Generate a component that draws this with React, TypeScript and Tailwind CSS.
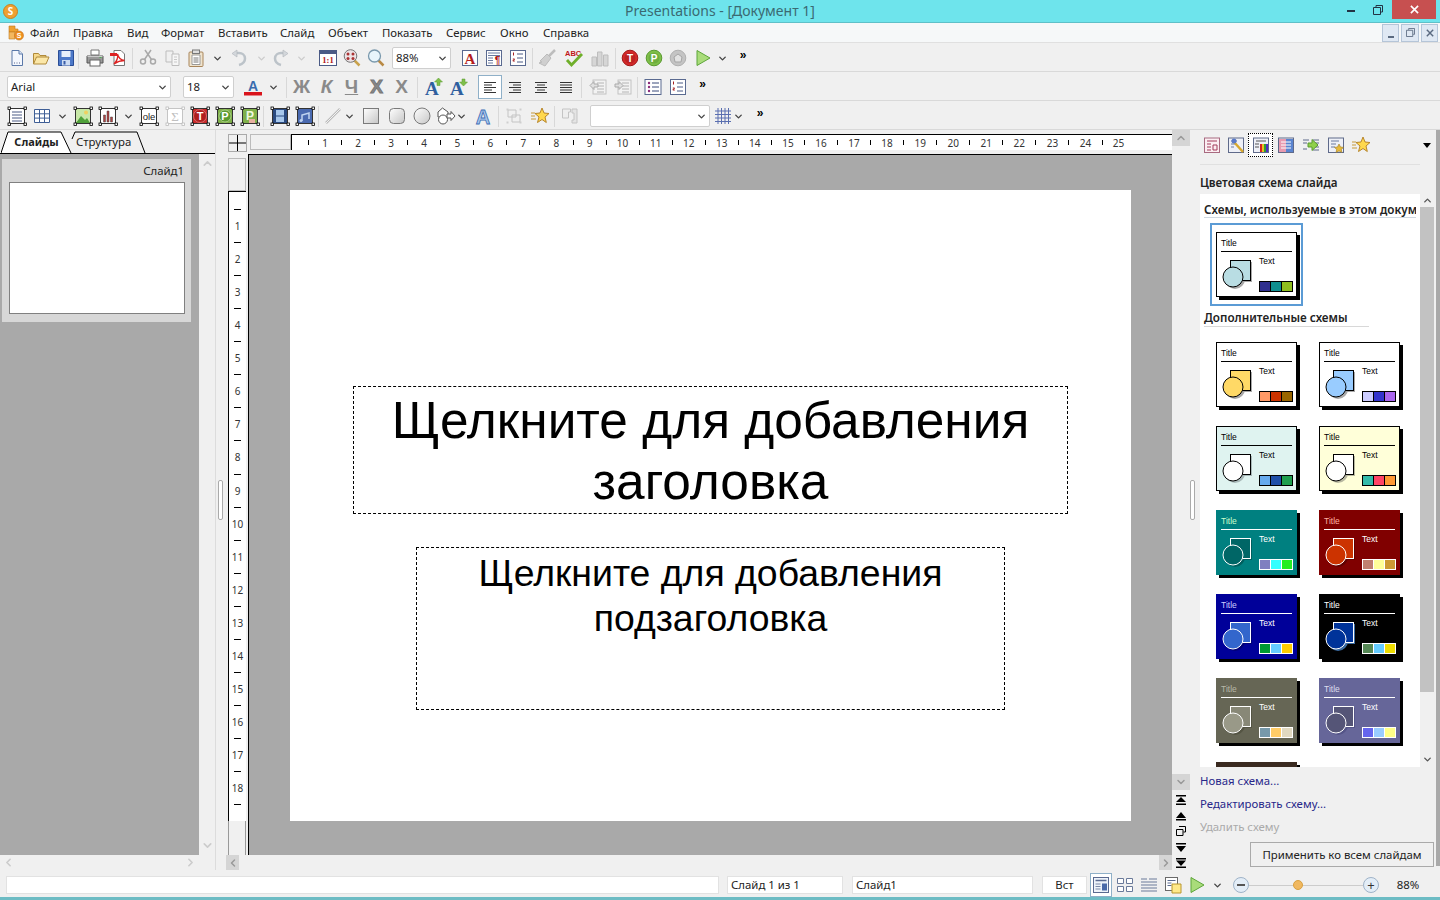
import { ReactNode } from 'react';
import { ChevronDown, ChevronLeft, ChevronRight, ChevronUp } from 'lucide-react';

const Svg = ({ children }: { children: ReactNode }) => (
  <svg viewBox="0 0 18 18" className="block w-[18px] h-[18px] flex-none overflow-visible">{children}</svg>
);

const Chev = () => <ChevronDown size={11} strokeWidth={3} className="text-[#444] flex-none" />;

const Sep = ({ cls = 'mx-[3px]' }: { cls?: string }) => <div className={`w-px h-[21px] bg-[#d8d8d8] flex-none ${cls}`} />;

const Slot = ({ w = 'w-[24px]', children }: { w?: string; children: ReactNode }) => (
  <div className={`${w} h-[22px] flex items-center justify-center flex-none`}>{children}</div>
);

const More = () => <span className="text-[12px] leading-[14px] font-bold text-black -mt-[6px] font-['Liberation_Sans',sans-serif]">»</span>;

// row 1 icons
const NewDoc = () => (
  <Svg>
    <path d="M4 1.500h7l3.500 3.500v11.500H4z" fill="#f4f7fd" stroke="#5a78a8" />
    <path d="M11 1.500V5h3.500" fill="#dfe8f6" stroke="#5a78a8" />
    <path d="M6 14h1M8.500 14h1M11 14h1" stroke="#55608a" />
  </Svg>
);
const OpenFolder = () => (
  <Svg>
    <path d="M1.500 15V4.500h5l1.500 2h6v2" fill="#f6d98c" stroke="#b08a3a" />
    <path d="M1.500 15l3-7h12.500l-3 7z" fill="#fbe7a8" stroke="#b08a3a" />
  </Svg>
);
const Floppy = () => (
  <Svg>
    <path d="M1.500 1.500h15v15h-15z" fill="#4d79c9" stroke="#2a4d96" />
    <rect x="4.500" y="2" width="9" height="6" fill="#e8f0fb" />
    <rect x="5" y="11" width="8" height="5.500" fill="#cddcf3" />
    <rect x="6.500" y="12" width="2" height="3.500" fill="#3a5da8" />
  </Svg>
);
const Printer = () => (
  <Svg>
    <path d="M5 1h8v5H5z" fill="#fff" stroke="#777" />
    <path d="M1 7h16v7H1z" fill="#9a9a9a" stroke="#555" />
    <rect x="4" y="11" width="10" height="6" fill="#fff" stroke="#666" />
    <path d="M13.500 8.500h2" stroke="#4caf50" />
    <path d="M1.500 7.500h15" stroke="#ccc" />
  </Svg>
);
const Pdf = () => (
  <Svg>
    <path d="M5 1.500h7l3.500 3.500v11.500H5z" fill="#fff" stroke="#777" />
    <path d="M1 4h7v3H1z" fill="#d22" />
    <path d="M5 15c3-3 4-7 3.500-10 1 4 3 6 7 6.500-4 0-7 1-10.500 3.500z" fill="none" stroke="#d22" strokeWidth="1.300" />
  </Svg>
);
const Scissors = () => (
  <Svg>
    <circle cx="4" cy="12.500" r="2.500" fill="none" stroke="#a9a9a9" strokeWidth="1.500" />
    <circle cx="14" cy="12.500" r="2.500" fill="none" stroke="#a9a9a9" strokeWidth="1.500" />
    <path d="M5.500 10.500L12 1M12.500 10.500L6 1" stroke="#a9a9a9" strokeWidth="1.500" />
  </Svg>
);
const Copy = () => (
  <Svg>
    <path d="M2 2h7v11H2z" fill="#f0f0f0" stroke="#bdbdbd" />
    <path d="M8 5h7v11.500H8z" fill="#f6f6f6" stroke="#bdbdbd" />
    <path d="M10 8h3M10 10.500h3M10 13h3" stroke="#c8c8c8" />
  </Svg>
);
const Paste = () => (
  <Svg>
    <rect x="2" y="3" width="14" height="14.500" rx="1" fill="#efe3cd" stroke="#a8855a" />
    <rect x="5.500" y="1" width="7" height="3.500" fill="#ddd" stroke="#777" />
    <path d="M5 6h8v9.500H5z" fill="#fff" stroke="#999" />
    <path d="M6.500 9h5M6.500 11h5M6.500 13h5" stroke="#777" />
  </Svg>
);
const Undo = ({ flip = false }: { flip?: boolean }) => (
  <Svg>
    <g transform={flip ? 'translate(18,0) scale(-1,1)' : undefined}>
      <path d="M9 16c4-1 6-3 6-6.500C15 6 12 4 9 4H5" fill="none" stroke="#bcc3c9" strokeWidth="2.500" />
      <path d="M7 1L2 4.500 7 8z" fill="#d3d7db" stroke="#aeb4ba" strokeWidth=".6" />
    </g>
  </Svg>
);
const OneToOne = () => (
  <Svg>
    <rect x="0.500" y="1.500" width="17" height="15" fill="#fff" stroke="#4a5a85" />
    <rect x="1" y="2" width="16" height="3" fill="#4a5a85" />
    <text x="9" y="14" textAnchor="middle" fontSize="8.500" fontWeight="700" fill="#b01818" fontFamily="Liberation Serif">1:1</text>
  </Svg>
);
const ZoomFit = () => (
  <Svg>
    <path d="M11 11l5.500 5.500" stroke="#c9a24d" strokeWidth="2.500" />
    <circle cx="7.500" cy="7" r="6.300" fill="#ece3e6" stroke="#777" />
    <circle cx="5" cy="5" r="1.500" fill="#a33" />
    <circle cx="10" cy="5" r="1.500" fill="#a33" />
    <circle cx="5" cy="9.500" r="1.500" fill="#a33" />
    <circle cx="10" cy="9.500" r="1.500" fill="#a33" />
  </Svg>
);
const Magnifier = () => (
  <Svg>
    <path d="M11.500 11.500l5 5" stroke="#b98a45" strokeWidth="2.500" />
    <circle cx="7.500" cy="7" r="6" fill="#e8f5fb" stroke="#7a99ad" strokeWidth="1.300" />
  </Svg>
);
const BoxA = () => (
  <Svg>
    <rect x="1.500" y="1.500" width="15" height="15" fill="#fff" stroke="#5a6a90" />
    <text x="9" y="14.500" textAnchor="middle" fontSize="15" fontWeight="700" fill="#b31c1c" fontFamily="Liberation Serif">A</text>
  </Svg>
);
const BoxPara = () => (
  <Svg>
    <rect x="1.500" y="1.500" width="15" height="15" fill="#fff" stroke="#5a6a90" />
    <path d="M3 4h12M3 6.500h12M3 9h5M3 11.500h5M3 14h5" stroke="#6a7aa0" />
    <text x="12.500" y="15" textAnchor="middle" fontSize="10" fontWeight="700" fill="#b01818" fontFamily="Liberation Sans">¶</text>
  </Svg>
);
const BoxList = () => (
  <Svg>
    <rect x="1.500" y="1.500" width="15" height="15" fill="#fff" stroke="#5a6a90" />
    <path d="M4.500 3.500v3M3.800 10h1.800l-1.800 2h2" stroke="#a52020" fill="none" />
    <path d="M8 5h6M8 9h6M8 13h6" stroke="#4a5a85" />
  </Svg>
);
const Broom = () => (
  <Svg>
    <path d="M17 1l-6 6" stroke="#bdbdbd" strokeWidth="2.500" />
    <path d="M9 5l4 4-6 8-6-3 3-1-2-1z" fill="#cfcfcf" stroke="#bbb" />
  </Svg>
);
const AbcCheck = () => (
  <Svg>
    <text x="0" y="7" fontSize="7.500" fontWeight="700" fill="#c01818" fontFamily="Liberation Sans">ABC</text>
    <path d="M2 11l4.500 5L17 5" fill="none" stroke="#6faf2a" strokeWidth="2.800" />
  </Svg>
);
const ChartGray = () => (
  <Svg>
    <path d="M1 8h4.500v9H1zM6.500 3H11v14H6.500zM12.500 6H17v11h-4.500z" fill="#d6d6d6" stroke="#bdbdbd" />
  </Svg>
);
const Ball = ({ c, c2, t }: { c: string; c2: string; t?: string }) => (
  <Svg>
    <circle cx="9" cy="9" r="7.800" fill={c} stroke={c2} />
    <circle cx="9" cy="9" r="5.500" fill={c2} opacity=".45" />
    {t && <text x="9" y="12.500" textAnchor="middle" fontSize="10" fontWeight="700" fill="#fff" fontFamily="Liberation Sans">{t}</text>}
  </Svg>
);
const GrayBall = () => (
  <Svg>
    <circle cx="9" cy="9" r="7.800" fill="#c4c4c4" stroke="#b0b0b0" />
    <path d="M5 8l4-3 4 3-1 5H6z" fill="#e2e2e2" stroke="#a5a5a5" />
  </Svg>
);
const Play = () => (
  <Svg>
    <path d="M3 1.500l13 7.500-13 7.500z" fill="#a9dc7a" stroke="#5da53a" />
  </Svg>
);

// row 2 icons
const FontColor = () => (
  <Svg>
    <text x="9" y="12.500" textAnchor="middle" fontSize="14" fontWeight="700" fill="#3a6cae" fontFamily="Liberation Sans">A</text>
    <rect x="0" y="14" width="18" height="3.500" fill="#d9141c" />
  </Svg>
);
const Fmt = ({ children, cls = '' }: { children: ReactNode; cls?: string }) => (
  <span className={`text-[19px] leading-[22px] font-bold text-[#8a8a8a] font-['Liberation_Sans',sans-serif] ${cls}`}>{children}</span>
);
const AUp = ({ down = false }: { down?: boolean }) => (
  <Svg>
    <text x="0" y="17" fontSize="19" fontWeight="700" fill="#2f5f9f" fontFamily="Liberation Serif">A</text>
    <path d={down ? 'M12 1h3v3h2.500l-4 4-4-4H12z' : 'M13.500 0l4 4H15v3.500h-3V4H9.500z'} fill="#7fbf4a" stroke="#5a9a30" strokeWidth=".5" />
  </Svg>
);
const Align = ({ d }: { d: string }) => (
  <Svg>
    <path d={d} stroke="#333" strokeWidth="1" />
  </Svg>
);
const Indent = ({ flip = false }: { flip?: boolean }) => (
  <Svg>
    <rect x="4" y="2" width="13" height="14" fill="#f3f3f3" stroke="#c2c2c2" />
    <path d="M8 5h7M8 8h7M8 11h7M8 14h7" stroke="#b4b4b4" />
    <path d={flip ? 'M1 6h4V3.500L9 7.500l-4 4V9H1z' : 'M9 6H5V3.500L1 7.500l4 4V9h4z'} fill="#e0e0e0" stroke="#aaa" />
  </Svg>
);
const Bullets = () => (
  <Svg>
    <rect x="1" y="1.500" width="16" height="15" fill="#fff" stroke="#5a6a90" />
    <circle cx="5" cy="5" r="1.200" fill="#8a2a7a" />
    <circle cx="5" cy="9" r="1.200" fill="#8a2a7a" />
    <circle cx="5" cy="13" r="1.200" fill="#8a2a7a" />
    <path d="M8 5h7M8 9h7M8 13h7" stroke="#3a4a7a" />
  </Svg>
);

// row 3 icons: object frames with handles
const Frame = ({ children, dim = false }: { children: ReactNode; dim?: boolean }) => {
  const pts = [[1, 1], [17, 1], [1, 17], [17, 17]];
  return (
    <Svg>
      <rect x="1.500" y="1.500" width="15" height="15" fill="#fff" stroke={dim ? '#c5c5c5' : '#333'} />
      {children}
      {pts.map(([x, y]) => (
        <rect key={`${x}-${y}`} x={x - 1} y={y - 1} width="2.500" height="2.500" fill="#fff" stroke={dim ? '#bbb' : '#000'} strokeWidth=".8" />
      ))}
    </Svg>
  );
};
const Table = () => (
  <Svg>
    <path d="M1.500 2.500h15v13h-15zM1.500 6.800h15M1.500 11.100h15M6.500 2.500v13M11.500 2.500v13" fill="#fff" stroke="#3e5e96" />
  </Svg>
);
const Rect3d = ({ r = 0 }: { r?: number }) => (
  <Svg>
    <defs>
      <linearGradient id="gr" x1="0" y1="0" x2="1" y2="1">
        <stop offset="0" stopColor="#fff" />
        <stop offset="1" stopColor="#c6c6c6" />
      </linearGradient>
    </defs>
    <rect x="1.500" y="1.500" width="15" height="15" rx={r} fill="url(#gr)" stroke="#7a7a7a" />
  </Svg>
);
const Circle3d = () => (
  <Svg>
    <circle cx="9" cy="9" r="8" fill="url(#gr)" stroke="#7a7a7a" />
  </Svg>
);
const Shapes = () => (
  <Svg>
    <path d="M5.500 1L11 5v5H1V5z" fill="#fff" stroke="#555" />
    <circle cx="6" cy="12.500" r="4.500" fill="#fff" stroke="#555" />
    <path d="M10 7h4V4.500L18 9l-4 4.500V11h-4z" fill="#fff" stroke="#555" />
  </Svg>
);
const WordArt = () => (
  <Svg>
    <text x="9" y="16.500" textAnchor="middle" fontSize="20" fontWeight="700" fill="#a8c8ec" stroke="#3f6fb5" strokeWidth=".8" fontFamily="Liberation Sans">A</text>
  </Svg>
);
const Group = () => (
  <Svg>
    <path d="M3 3h8v7H3zM7 8h8v7H7z" fill="none" stroke="#c4c4c4" />
    <path d="M1.500 1.500h2v2h-2zM14.500 1.500h2v2h-2zM1.500 14.500h2v2h-2zM14.500 14.500h2v2h-2z" fill="#cfcfcf" />
  </Svg>
);
const Star = () => (
  <Svg>
    <path d="M11 1l2 5 5 .5-4 3.500 1.300 5.500L11 12.500 6.500 15.500 8 10 4 6.500 9 6z" fill="#ffd84d" stroke="#b8862a" />
    <path d="M0 6h4M0 9h4M0 12h5" stroke="#c69a3a" />
  </Svg>
);
const ToolGray = () => (
  <Svg>
    <path d="M1.500 2h8v3h-2v6h-6z" fill="#eee" stroke="#c4c4c4" />
    <path d="M11 2h5v14h-5v-3h2V6h-2z" fill="#e4e4e4" stroke="#c4c4c4" />
  </Svg>
);
const GridBlue = () => (
  <Svg>
    <path d="M1 4h16M1 7.500h16M1 11h16M1 14.500h16M4 1v16M7.500 1v16M11 1v16M14.500 1v16" stroke="#5a6fb0" />
  </Svg>
);

// task pane icons
const Pane = ({ kind }: { kind: number }) => (
  <Svg>
    <rect x="1.500" y="2" width="15" height="14.500" fill={kind === 0 ? '#fbeef2' : '#eef0f7'} stroke={kind === 0 ? '#a86a80' : '#5f6a8a'} />
    {kind === 0 && <path d="M4 5h10M4 8h4M4 11h4M4 14h4M10 9h4v5h-4z" stroke="#a33a5a" fill="none" />}
    {kind === 1 && (
      <>
        <path d="M4 5h6M4 8h4M4 11h3" stroke="#6a7aa0" />
        <path d="M7 6l9 10" stroke="#d9a92e" strokeWidth="2.500" />
        <circle cx="7" cy="5" r="2.500" fill="#5a7ac8" />
      </>
    )}
    {kind === 2 && (
      <>
        <path d="M4 5h10M3 8h4M3 11h4" stroke="#555" />
        <path d="M8 8h2v8H8z" fill="#d92020" />
        <path d="M10 8h2v8h-2z" fill="#e8c020" />
        <path d="M12 8h2v8h-2z" fill="#30a030" />
        <path d="M14 8h2v8h-2z" fill="#5030c0" />
      </>
    )}
    {kind === 3 && (
      <>
        <path d="M2 3h7v13H2z" fill="#e89ab0" />
        <path d="M9 3h7v13H9z" fill="#5a84d0" />
        <path d="M4 6h10M4 9h10M4 12h10" stroke="#fff" />
      </>
    )}
    {kind === 4 && (
      <>
        <rect x="1" y="1" width="16" height="16" fill="#f0f0f0" />
        <path d="M1 4h6M1 7h4M1 13h4M11 4h6M13 7h4M13 11h4M11 14h6" stroke="#5f6a8a" />
        <path d="M6 7h4V3.500L16 9l-6 5.500V11H6z" fill="#8fd04a" stroke="#5a9a30" />
      </>
    )}
    {kind === 5 && (
      <>
        <path d="M4 5h8M4 8h5M4 11h4" stroke="#6a7aa0" />
        <path d="M12 8l1.500 3 3 .4-2.200 2 .6 3-2.900-1.500-2.900 1.500.6-3-2.200-2 3-.4z" fill="#e8b93a" stroke="#9a7a20" strokeWidth=".6" />
      </>
    )}
  </Svg>
);

// status bar view icons
const ViewNormal = () => (
  <Svg>
    <rect x="1.500" y="1.500" width="15" height="15" fill="#eef3fa" stroke="#5a6a90" />
    <path d="M3.500 4.500h11" stroke="#5a6a90" strokeWidth="1.500" />
    <path d="M3.500 8h5M3.500 10.500h5M3.500 13h5" stroke="#7a8aa8" />
    <rect x="10" y="7.500" width="5" height="7" fill="#4a6aa8" />
  </Svg>
);
const ViewGrid = () => (
  <Svg>
    <path d="M1.500 2.500h6v5h-6zM10.500 2.500h6v5h-6zM1.500 10.500h6v5h-6zM10.500 10.500h6v5h-6z" fill="#fff" stroke="#6a7a9a" />
  </Svg>
);
const ViewOutline = () => (
  <Svg>
    <path d="M1 3h6M9 3h8M1 6h16M1 9h16M1 12h16M1 15h16" stroke="#6a7a9a" />
  </Svg>
);
const ViewNotes = () => (
  <Svg>
    <rect x="1.500" y="1.500" width="12" height="13" fill="#fff" stroke="#6a6a6a" />
    <path d="M3.500 4.500h8M3.500 7h4M3.500 9.500h4" stroke="#5a6a90" />
    <path d="M8 8h9v9H8z" fill="#ffe98a" stroke="#b8962e" />
  </Svg>
);

const Nav = ({ kind }: { kind: string }) => (
  <svg viewBox="0 0 12 12" className="block w-[12px] h-[12px]">
    {kind === 'first' && <path d="M1 1h10v1.500H1zM6 3l5 5H1zM1 9.500h10V11H1z" />}
    {kind === 'prev' && <path d="M6 2l5 6H1zM1 9h10v1.500H1z" />}
    {kind === 'win' && <path d="M4 1.500h6.500V7H8.500M1.500 4.500h6.500V10.500H1.500z" fill="none" stroke="#000" />}
    {kind === 'next' && <path d="M1 2h10v1.500H1zM1 5h10l-5 6z" />}
    {kind === 'last' && <path d="M1 1h10v1.500H1zM1 3.500h10L6 9zM1 9.500h10V11H1z" />}
  </svg>
);

const Field = ({ w, children, cls = '' }: { w: string; children?: ReactNode; cls?: string }) => (
  <div className={`${w} h-[18px] bg-white border border-[#e2e2e2] flex items-center text-[11.400px] leading-[14px] text-[#222] flex-none ${cls}`}>{children}</div>
);

const Select = ({ w, text }: { w: string; text?: string }) => (
  <div className={`${w} h-[22px] bg-white border border-[#cfcfcf] rounded-[2px] flex items-center justify-between pl-[3px] pr-[2px] text-[11.400px] text-[#222] flex-none`}>
    <span>{text}</span>
    <Chev />
  </div>
);

const menu = [
  ['Файл', 'w-[43px]'],
  ['Правка', 'w-[54px]'],
  ['Вид', 'w-[34px]'],
  ['Формат', 'w-[57px]'],
  ['Вставить', 'w-[62px]'],
  ['Слайд', 'w-[48px]'],
  ['Объект', 'w-[54px]'],
  ['Показать', 'w-[64px]'],
  ['Сервис', 'w-[54px]'],
  ['Окно', 'w-[43px]'],
  ['Справка', 'w-[60px]'],
];

const rulerH = Array.from({ length: 25 }, (_, i) => i + 1);
const rulerV = Array.from({ length: 18 }, (_, i) => i + 1);

type Scheme = { bg: string; fg: string; title: string; shape: string; circle?: string; shadow: string; cards: string[]; frame: string; partial?: boolean };

const schemes: Scheme[] = [
  { bg: '#ffffff', fg: '#000000', title: '#000000', shape: '#ffd966', shadow: '#a8a8a8', cards: ['#ff9966', '#cc3300', '#996600'], frame: '#000000' },
  { bg: '#ffffff', fg: '#000000', title: '#000000', shape: '#99ccff', shadow: '#a8a8a8', cards: ['#ccccff', '#3333cc', '#aa66ee'], frame: '#000000' },
  { bg: '#dff3f0', fg: '#000000', title: '#000000', shape: '#ffffff', shadow: '#a8b8b8', cards: ['#66aaee', '#1f4fa8', '#1f9f4f'], frame: '#000000' },
  { bg: '#ffffd9', fg: '#000000', title: '#000000', shape: '#ffffff', shadow: '#b8b8a0', cards: ['#33bbaa', '#ff4466', '#ff9933'], frame: '#000000' },
  { bg: '#008080', fg: '#ffffff', title: '#ccffcc', shape: '#006666', shadow: '#006060', cards: ['#7f7fc0', '#33ffff', '#22ee22'], frame: '#ffffff' },
  { bg: '#800000', fg: '#ffffff', title: '#ffb0a0', shape: '#cc3300', shadow: '#600000', cards: ['#c08070', '#ffff99', '#cc9933'], frame: '#ffffff' },
  { bg: '#000099', fg: '#ffffff', title: '#ccccff', shape: '#3366cc', shadow: '#000077', cards: ['#009933', '#66ccff', '#ffcc00'], frame: '#ffffff' },
  { bg: '#000000', fg: '#ffffff', title: '#ffffff', shape: '#003399', shadow: '#3a6aa0', cards: ['#558855', '#66ccff', '#eedd00'], frame: '#ffffff' },
  { bg: '#666655', fg: '#ffffff', title: '#b8b8a8', shape: '#888877', circle: '#999988', shadow: '#555544', cards: ['#7799aa', '#ffcc66', '#e0d8c0'], frame: '#ffffff' },
  { bg: '#666699', fg: '#ffffff', title: '#ddddee', shape: '#555577', shadow: '#555588', cards: ['#6666ee', '#99ccff', '#ffff88'], frame: '#ffffff' },
  { bg: '#3a2a20', fg: '#ffffff', title: '#ccbbaa', shape: '#665544', shadow: '#332211', cards: ['#998877', '#ccbb99', '#eeddbb'], frame: '#ffffff', partial: true },
];

const current: Scheme = { bg: '#ffffff', fg: '#000000', title: '#000000', shape: '#b9dde3', shadow: '#a8a8a8', cards: ['#2f2f8f', '#0f8f8f', '#8fbf1f'], frame: '#000000' };

const SchemeCard = ({ s }: { s: Scheme }) => (
  <svg viewBox="0 0 84 68" className="block w-[84px] h-[68px]">
    <rect x="3" y="3" width="81" height="65" fill="#000" />
    <rect x="0.500" y="0.500" width="80" height="64" fill={s.bg} stroke={s.bg === '#ffffff' || s.bg === '#dff3f0' || s.bg === '#ffffd9' ? '#000' : s.bg} />
    {!s.partial && (
      <>
        <text x="5" y="13.500" fontSize="8.500" fill={s.title} fontFamily="Liberation Sans">Title</text>
        <text x="43" y="31.500" fontSize="8.500" fill={s.fg} fontFamily="Liberation Sans">Text</text>
      </>
    )}
    <path d="M5 19.500h71" stroke={s.fg} />
    <rect x="16" y="30" width="20" height="20" fill={s.shadow} />
    <circle cx="19" cy="47" r="10" fill={s.shadow} />
    <rect x="14.500" y="28.500" width="20" height="20" fill={s.shape} stroke={s.frame} />
    <circle cx="17" cy="45" r="10" fill={s.circle ?? s.shape} stroke={s.frame} />
    {s.cards.map((c, i) => (
      <rect key={c} x={43.5 + i * 11} y="49.500" width="11" height="10" fill={c} stroke={s.frame} />
    ))}
  </svg>
);

const PaneBtn = ({ w = 'w-[25px]', children }: { w?: string; children: ReactNode }) => (
  <div className={`${w} h-[24px] flex items-center justify-center flex-none`}>{children}</div>
);

export default function App() {
  return (
    <div className="w-[1440px] h-[900px] overflow-hidden flex flex-col bg-[#f0f0f0] text-[11.400px] text-[#222] font-['Noto_Sans','Liberation_Sans',sans-serif]">
      {/* Title bar */}
      <div className="h-[23px] bg-[#6ee4ec] border-b border-[#5fc0c8] grid grid-cols-[1fr_auto_1fr] items-center flex-none">
        <div className="pl-[3px]">
          <div className="w-[15px] h-[15px] rounded-full bg-[#f0a030] border border-[#c98020] text-white font-bold text-[10px] leading-[13px] text-center">S</div>
        </div>
        <div className="text-[14px] text-[#3b6a72] leading-[18px]">Presentations - [Документ 1]</div>
        <div className="flex items-start justify-end h-full pr-[4px]">
          <div className="w-[26px] h-[19px] flex items-center justify-center mr-[1px]">
            <div className="w-[8px] h-[2px] bg-[#234] mt-[2px]" />
          </div>
          <div className="w-[26px] h-[19px] flex items-center justify-center mr-px">
            <svg viewBox="0 0 10 10" className="w-[10px] h-[10px]">
              <path d="M3 2V.5h6.500V7H8M.5 2.500h7v7h-7z" fill="none" stroke="#234" />
            </svg>
          </div>
          <div className="w-[44px] h-[19px] bg-[#c75050] flex items-center justify-center">
            <svg viewBox="0 0 10 10" className="w-[9px] h-[9px]">
              <path d="M1 1l8 8M9 1L1 9" stroke="#fff" strokeWidth="1.800" />
            </svg>
          </div>
        </div>
      </div>

      {/* Menu bar */}
      <div className="h-[20px] bg-[#f6f8f9] border-b border-[#e0e0e0] flex items-center flex-none">
        <div className="w-[30px] pl-[8px] flex-none">
          <svg viewBox="0 0 16 16" className="block w-[16px] h-[16px] overflow-visible">
            <path d="M1 1h6v3h3v3H1z" fill="#f0a030" stroke="#c07820" strokeWidth=".6" />
            <path d="M1 7h6v7H1z" fill="#f4b860" stroke="#c07820" strokeWidth=".6" />
            <circle cx="11" cy="10.500" r="4.500" fill="#f09020" stroke="#c07020" strokeWidth=".6" />
            <text x="11" y="13" textAnchor="middle" fontSize="7" fontWeight="700" fill="#fff" fontFamily="Liberation Sans">S</text>
          </svg>
        </div>
        {menu.map(([t, w]) => (
          <div key={t} className={`${w} leading-[14px] flex-none`}>{t}</div>
        ))}
        <div className="flex-1 flex justify-end items-center pr-[2px] gap-[2px]">
          <div className="w-[17px] h-[18px] bg-[#dfe8f3] border border-[#b5c5d8] flex items-end justify-center pb-[3px]">
            <div className="w-[6px] h-[2px] bg-[#5a6a80]" />
          </div>
          <div className="w-[18px] h-[18px] bg-[#dfe8f3] border border-[#b5c5d8] flex items-center justify-center">
            <svg viewBox="0 0 10 10" className="w-[9px] h-[9px]">
              <path d="M3 2V.5h6.500V7H8M.5 2.500h7v7h-7z" fill="none" stroke="#5a6a80" />
            </svg>
          </div>
          <div className="w-[17px] h-[18px] bg-[#dfe8f3] border border-[#b5c5d8] flex items-center justify-center">
            <svg viewBox="0 0 10 10" className="w-[8px] h-[8px]">
              <path d="M1 1l8 8M9 1L1 9" stroke="#5a6a80" strokeWidth="1.800" />
            </svg>
          </div>
        </div>
      </div>

      {/* Toolbar 1 */}
      <div className="h-[29px] border-b border-[#d9d9d9] flex items-center pl-[5px] pt-[2px] flex-none">
        <Slot><NewDoc /></Slot>
        <Slot><OpenFolder /></Slot>
        <Slot w="w-[25px]"><Floppy /></Slot>
        <Sep cls="mr-[4px]" />
        <Slot><Printer /></Slot>
        <Slot w="w-[22px]"><Pdf /></Slot>
        <Sep cls="ml-[3px] mr-[2px]" />
        <Slot w="w-[25px]"><Scissors /></Slot>
        <Slot w="w-[25px]"><Copy /></Slot>
        <Slot w="w-[22px]"><Paste /></Slot>
        <Slot w="w-[20px]"><Chev /></Slot>
        <Slot><Undo /></Slot>
        <Slot w="w-[20px]"><ChevronDown size={11} strokeWidth={3} className="text-[#ccc]" /></Slot>
        <Slot w="w-[20px]"><Undo flip /></Slot>
        <Slot w="w-[20px]"><ChevronDown size={11} strokeWidth={3} className="text-[#ccc]" /></Slot>
        <div className="w-[4px] flex-none" />
        <Slot w="w-[25px]"><OneToOne /></Slot>
        <Slot><ZoomFit /></Slot>
        <Slot><Magnifier /></Slot>
        <div className="w-[4px] flex-none" />
        <Select w="w-[59px]" text="88%" />
        <div className="w-[7px] flex-none" />
        <Slot><BoxA /></Slot>
        <Slot><BoxPara /></Slot>
        <Slot><BoxList /></Slot>
        <Sep cls="mx-[2px]" />
        <Slot w="w-[23px]"><Broom /></Slot>
        <div className="w-[3px] flex-none" />
        <Slot w="w-[26px]"><AbcCheck /></Slot>
        <Slot w="w-[26px]"><ChartGray /></Slot>
        <Sep cls="mx-[2px]" />
        <Slot><Ball c="#d42a2a" c2="#a01818" t="T" /></Slot>
        <Slot><Ball c="#7fbf4a" c2="#5a9a30" t="P" /></Slot>
        <Slot w="w-[23px]"><GrayBall /></Slot>
        <Slot w="w-[27px]"><Play /></Slot>
        <Slot w="w-[13px]"><Chev /></Slot>
        <Slot w="w-[28px]"><More /></Slot>
      </div>

      {/* Toolbar 2 */}
      <div className="h-[29px] border-b border-[#d9d9d9] flex items-center pl-[7px] pt-[2px] flex-none">
        <Select w="w-[164px]" text="Arial" />
        <div className="w-[12px] flex-none" />
        <Select w="w-[51px]" text="18" />
        <div className="w-[7px] flex-none" />
        <Slot><FontColor /></Slot>
        <Slot w="w-[16px]"><Chev /></Slot>
        <Sep cls="ml-[5px] mr-[2px]" />
        <Slot w="w-[25px]"><Fmt>Ж</Fmt></Slot>
        <Slot w="w-[25px]"><Fmt cls="italic">К</Fmt></Slot>
        <Slot w="w-[25px]"><Fmt cls="underline">Ч</Fmt></Slot>
        <Slot w="w-[25px]"><Fmt cls="[-webkit-text-stroke:1px_#777]">Х</Fmt></Slot>
        <Slot w="w-[25px]"><Fmt>Х</Fmt></Slot>
        <Sep cls="ml-[3px] mr-[3px]" />
        <Slot w="w-[25px]"><AUp /></Slot>
        <Slot w="w-[25px]"><AUp down /></Slot>
        <div className="w-[7px] flex-none" />
        <div className="w-[24px] h-[24px] bg-white border border-[#8fb0c8] flex items-center justify-center flex-none">
          <Align d="M3 4.500h12M3 7h8M3 9.500h12M3 12h8M3 14.500h12" />
        </div>
        <Slot w="w-[26px]"><Align d="M3 4.500h12M7 7h8M3 9.500h12M7 12h8M3 14.500h12" /></Slot>
        <Slot w="w-[25px]"><Align d="M3 4.500h12M5 7h8M3 9.500h12M5 12h8M3 14.500h12" /></Slot>
        <Slot w="w-[25px]"><Align d="M3 4.500h12M3 7h12M3 9.500h12M3 12h12M3 14.500h12" /></Slot>
        <Sep cls="ml-[3px] mr-[3px]" />
        <Slot w="w-[25px]"><Indent /></Slot>
        <Slot w="w-[25px]"><Indent flip /></Slot>
        <Sep cls="ml-[2px] mr-[2px]" />
        <Slot w="w-[25px]"><Bullets /></Slot>
        <Slot w="w-[25px]"><BoxList /></Slot>
        <Slot w="w-[25px]"><More /></Slot>
      </div>

      {/* Toolbar 3 */}
      <div className="h-[29px] border-b border-[#d9d9d9] flex items-center pl-[5px] pt-[2px] flex-none">
        <Slot><Frame><path d="M4 5h10M4 8h10M4 11h10M4 14h10" stroke="#4a5a85" /></Frame></Slot>
        <Slot w="w-[26px]"><Table /></Slot>
        <Slot w="w-[15px]"><Chev /></Slot>
        <Slot w="w-[25px]">
          <Frame>
            <rect x="2" y="2" width="14" height="14" fill="#c8e8a8" />
            <path d="M2 16l5-7 4 4 2-2 3 5z" fill="#4fa03a" />
            <circle cx="12" cy="5.500" r="2" fill="#f0d060" />
          </Frame>
        </Slot>
        <Slot w="w-[25px]">
          <Frame>
            <path d="M4.500 15V8h2v7zM8 15V4h2v11zM11.500 15v-5h2v5z" fill="#b04040" stroke="#444" strokeWidth=".5" />
          </Frame>
        </Slot>
        <Slot w="w-[16px]"><Chev /></Slot>
        <Slot w="w-[26px]">
          <Frame>
            <text x="9" y="12.500" textAnchor="middle" fontSize="9.500" fill="#222" fontFamily="Liberation Sans">ole</text>
          </Frame>
        </Slot>
        <Slot w="w-[25px]">
          <Frame dim>
            <text x="9" y="14" textAnchor="middle" fontSize="13" fill="#c0c0c0" fontFamily="Liberation Serif">Σ</text>
          </Frame>
        </Slot>
        <Slot w="w-[25px]">
          <Frame>
            <rect x="2" y="2" width="14" height="14" fill="#c82a2a" />
            <circle cx="9" cy="9" r="6.500" fill="#b01e1e" stroke="#e8a0a0" strokeWidth=".6" />
            <text x="9" y="13" textAnchor="middle" fontSize="11" fontWeight="700" fill="#fff" fontFamily="Liberation Sans">T</text>
          </Frame>
        </Slot>
        <Slot w="w-[25px]">
          <Frame>
            <rect x="2" y="2" width="14" height="14" fill="#7fb04a" />
            <circle cx="9" cy="9" r="6" fill="#5a9a30" stroke="#d0e8b0" strokeWidth=".6" />
            <text x="9" y="13" textAnchor="middle" fontSize="11" fontWeight="700" fill="#fff" fontFamily="Liberation Sans">P</text>
          </Frame>
        </Slot>
        <Slot w="w-[25px]">
          <Frame>
            <rect x="2" y="2" width="14" height="14" fill="#7fb04a" />
            <text x="9" y="13" textAnchor="middle" fontSize="12" fontWeight="700" fill="#eef8e0" fontFamily="Liberation Sans">P</text>
            <rect x="8" y="12" width="6" height="4" fill="#e8b0a0" />
          </Frame>
        </Slot>
        <Sep cls="ml-[1px] mr-[3px]" />
        <Slot w="w-[25px]">
          <Frame>
            <rect x="2" y="2" width="14" height="14" fill="#2a4a80" />
            <rect x="5" y="3" width="8" height="5.500" fill="#a8c8ec" />
            <rect x="5" y="9.500" width="8" height="5.500" fill="#a8c8ec" />
          </Frame>
        </Slot>
        <Slot w="w-[25px]">
          <Frame>
            <rect x="2" y="2" width="14" height="14" fill="#4a6ab0" />
            <path d="M6 14V8l7-2v6" fill="none" stroke="#c0d4f0" strokeWidth="1.500" />
            <circle cx="5" cy="13.500" r="1.500" fill="#c0d4f0" />
          </Frame>
        </Slot>
        <Sep cls="ml-[1px] mr-[3px]" />
        <Slot w="w-[22px]">
          <Svg>
            <path d="M2 16L16 2" stroke="#bbb" strokeWidth="2.500" />
            <path d="M2 16L16 2" stroke="#fff" strokeWidth=".8" />
          </Svg>
        </Slot>
        <Slot w="w-[10px]"><Chev /></Slot>
        <div className="w-[4px] flex-none" />
        <Slot w="w-[26px]"><Rect3d /></Slot>
        <Slot w="w-[25px]"><Rect3d r={4} /></Slot>
        <Slot w="w-[25px]"><Circle3d /></Slot>
        <Slot><Shapes /></Slot>
        <Slot w="w-[6px]"><Chev /></Slot>
        <div className="w-[8px] flex-none" />
        <Slot w="w-[22px]"><WordArt /></Slot>
        <Sep cls="ml-[4px] mr-[3px]" />
        <Slot><Group /></Slot>
        <Slot w="w-[27px]"><Star /></Slot>
        <Sep cls="ml-[1px] mr-[3px]" />
        <Slot><ToolGray /></Slot>
        <div className="w-[8px] flex-none" />
        <Select w="w-[120px]" />
        <div className="w-[4px] flex-none" />
        <Slot w="w-[18px]"><GridBlue /></Slot>
        <Slot w="w-[12px]"><Chev /></Slot>
        <Slot w="w-[32px]"><More /></Slot>
      </div>

      {/* Main */}
      <div className="h-[740px] flex flex-none">
        {/* Slides panel */}
        <div className="w-[216px] flex flex-col flex-none border-r border-[#dcdcdc]">
          <div className="h-[24px] flex items-end pl-[1px] border-b border-black flex-none">
            <div className="relative w-[72px] h-[22px] flex items-center justify-center font-bold text-[11px] leading-[14px] text-[#222]">
              <svg viewBox="0 0 72 22" className="absolute inset-0 w-[72px] h-[22px]">
                <path d="M0 22L7 1h53l10 21" fill="#fff" stroke="#000" />
              </svg>
              <span className="relative -ml-[1px]">Слайды</span>
            </div>
            <div className="relative w-[79px] h-[22px] -ml-[6px] flex items-center pl-[9px] text-[11.400px] leading-[14px]">
              <svg viewBox="0 0 79 22" className="absolute inset-0 w-[79px] h-[22px]">
                <path d="M5 8L8 1h62l8 21" fill="none" stroke="#000" />
              </svg>
              <span className="relative">Структура</span>
            </div>
          </div>
          <div className="flex flex-1 min-h-0">
            <div className="w-[199px] bg-[#a9a9a9] pl-[2px] pt-[5px] flex-none">
              <div className="w-[189px] h-[163px] bg-[#d7d7d7] pl-[7px] flex flex-col">
                <div className="w-[175px] h-[23px] flex items-center justify-end leading-[14px] text-[#222]">Слайд1</div>
                <div className="w-[176px] h-[132px] bg-white border border-[#808080]" />
              </div>
            </div>
            <div className="flex-1 flex flex-col items-center justify-between py-[3px]">
              <ChevronUp size={13} strokeWidth={3} className="text-[#ccc]" />
              <ChevronDown size={13} strokeWidth={3} className="text-[#ccc]" />
            </div>
          </div>
          <div className="h-[15px] flex items-center justify-between pl-[2px] pr-[18px] flex-none">
            <ChevronLeft size={13} strokeWidth={3} className="text-[#ccc]" />
            <ChevronRight size={13} strokeWidth={3} className="text-[#ccc]" />
          </div>
        </div>

        {/* Splitter */}
        <div className="w-[10px] pl-[2px] flex items-center flex-none">
          <div className="w-[5px] h-[40px] bg-white border border-[#aaa] rounded-[2px]" />
        </div>

        {/* Editor */}
        <div className="w-[946px] flex flex-col flex-none">
          <div className="h-[24px] flex flex-none">
            <div className="w-[24px] pl-[2px] pt-[4px] flex-none">
              <div className="w-[19px] h-[18px] border border-[#aaa] flex items-center justify-center">
                <svg viewBox="0 0 17 16" className="w-[17px] h-[16px]">
                  <path d="M8.500 0v16M0 8h17" stroke="#000" />
                </svg>
              </div>
            </div>
            <div className="w-[41px] h-[16px] mt-[4px] bg-[#f0f0f0] border border-[#bbb] flex-none" />
            <div className="flex-1 h-[16px] mt-[4px] bg-white border-t border-l border-black flex items-center pl-[16px] overflow-hidden">
              {rulerH.map((n) => (
                <div key={n} className="w-[33.070px] flex items-center flex-none">
                  <div className="w-px h-[5px] bg-black flex-none" />
                  <div className="flex-1 text-center text-[10px] leading-[12px] text-[#333]">{n}</div>
                </div>
              ))}
            </div>
          </div>
          <div className="flex flex-1 min-h-0">
            <div className="w-[22px] pl-[2px] flex flex-col flex-none">
              <div className="w-[18px] h-[33px] mt-[4px] bg-[#f0f0f0] border border-[#bbb] flex-none" />
              <div className="w-[18px] h-[630px] bg-white border-l border-t border-black flex flex-col items-center pt-[17px] flex-none">
                {rulerV.map((n) => (
                  <div key={n} className="h-[33.070px] w-full flex flex-col items-center flex-none">
                    <div className="w-[7px] h-px bg-black flex-none" />
                    <div className="flex-1 flex items-center text-[10px] leading-[12px] text-[#333]">{n}</div>
                  </div>
                ))}
                <div className="w-[7px] h-px bg-black flex-none" />
              </div>
              <div className="w-[18px] flex-1 border-x border-[#999]" />
            </div>
            <div className="flex-1 bg-[#a9a9a9] border-l border-t border-black pl-[41px] pt-[35px] overflow-hidden">
              <div className="w-[841px] h-[631px] bg-white flex flex-col items-center pt-[196px] font-['Liberation_Sans',sans-serif] text-black text-center">
                <div className="w-[715px] h-[128px] border border-dashed border-black text-[51.400px] leading-[61px] flex-none pt-[3px]">
                  Щелкните для добавления заголовка
                </div>
                <div className="w-[589px] h-[163px] mt-[33px] border border-dashed border-black text-[37.400px] leading-[45px] flex-none pt-[3px]">
                  Щелкните для добавления подзаголовка
                </div>
              </div>
            </div>
          </div>
          <div className="h-[15px] flex items-stretch flex-none">
            <div className="w-[13px] bg-[#d5d5d5] flex items-center justify-center flex-none">
              <ChevronLeft size={12} strokeWidth={3} className="text-[#999]" />
            </div>
            <div className="flex-1" />
            <div className="w-[13px] bg-[#d5d5d5] flex items-center justify-center flex-none">
              <ChevronRight size={12} strokeWidth={3} className="text-[#999]" />
            </div>
          </div>
        </div>

        {/* Editor vertical bar */}
        <div className="w-[18px] flex flex-col items-center flex-none">
          <div className="w-full h-[16px] bg-[#d5d5d5] flex items-center justify-center flex-none">
            <ChevronUp size={12} strokeWidth={3} className="text-[#999]" />
          </div>
          <div className="flex-1" />
          <div className="w-full h-[16px] bg-[#d5d5d5] flex items-center justify-center flex-none mb-[2px]">
            <ChevronDown size={12} strokeWidth={3} className="text-[#999]" />
          </div>
          <div className="h-[16px] flex items-center"><Nav kind="first" /></div>
          <div className="h-[15px] flex items-center"><Nav kind="prev" /></div>
          <div className="h-[15px] flex items-center"><Nav kind="win" /></div>
          <div className="h-[17px] flex items-center"><Nav kind="next" /></div>
          <div className="h-[15px] flex items-center"><Nav kind="last" /></div>
        </div>

        {/* Task pane */}
        <div className="w-[10px] flex items-center flex-none">
          <div className="w-[5px] h-[40px] bg-white border border-[#aaa] rounded-[2px]" />
        </div>
        <div className="w-[236px] flex flex-col flex-none">
          <div className="h-[35px] w-[220px] border-b border-[#e0e0e0] flex items-start pt-[3px] flex-none">
            <PaneBtn w="w-[23px]"><Pane kind={0} /></PaneBtn>
            <PaneBtn><Pane kind={1} /></PaneBtn>
            <div className="w-[25px] h-[24px] flex items-center justify-center border border-dotted border-black bg-white flex-none"><Pane kind={2} /></div>
            <PaneBtn><Pane kind={3} /></PaneBtn>
            <PaneBtn><Pane kind={4} /></PaneBtn>
            <PaneBtn><Pane kind={5} /></PaneBtn>
            <PaneBtn><Star /></PaneBtn>
            <div className="flex-1" />
            <PaneBtn w="w-[8px] -mr-[11px]">
              <svg viewBox="0 0 8 5" className="w-[8px] h-[5px]">
                <path d="M0 0h8L4 5z" fill="#000" />
              </svg>
            </PaneBtn>
          </div>
          <div className="h-[29px] pt-[6px] flex items-center font-semibold text-[11.600px] leading-[14px] text-[#222] flex-none">Цветовая схема слайда</div>
          <div className="h-[573px] flex flex-none">
            <div className="w-[220px] bg-white overflow-hidden flex-none">
              <div className="h-[24px] mx-[4px] border-b border-[#d0d8e0] flex items-center whitespace-nowrap font-semibold text-[11.700px] leading-[14px] pt-[7px] overflow-hidden">
                Схемы, используемые в этом докуме
              </div>
              <div className="ml-[10px] mt-[5px] w-[93px] h-[83px] border-2 border-[#5b9bd5] pl-[4px] pt-[7px]">
                <SchemeCard s={current} />
              </div>
              <div className="h-[21px] w-[165px] ml-[4px] border-b border-[#d8d8d8] flex items-end whitespace-nowrap font-semibold text-[11.700px] leading-[14px] pb-[2px]">
                Дополнительные схемы
              </div>
              <div className="grid grid-cols-[103px_103px] auto-rows-[84px] pl-[16px] pt-[15px]">
                {schemes.map((s) => (
                  <SchemeCard key={s.bg + s.shape} s={s} />
                ))}
              </div>
            </div>
            <div className="w-[14px] flex flex-col items-center flex-none">
              <div className="h-[13px] flex items-center"><ChevronUp size={11} strokeWidth={3} className="text-[#555]" /></div>
              <div className="w-full h-[485px] bg-[#c2c2c2]" />
              <div className="flex-1 flex items-end pb-[2px]"><ChevronDown size={11} strokeWidth={3} className="text-[#555]" /></div>
            </div>
          </div>
          <div className="h-[23px] mt-[2px] flex items-center text-[#27278a] leading-[14px] flex-none">Новая схема...</div>
          <div className="h-[23px] flex items-center text-[#27278a] leading-[14px] flex-none">Редактировать схему...</div>
          <div className="h-[23px] flex items-center text-[#aaa] leading-[14px] flex-none">Удалить схему</div>
          <div className="ml-[50px] mt-[4px] w-[184px] h-[25px] bg-[#f0f0f0] border border-[#aaa] flex items-center justify-center leading-[14px] flex-none">
            Применить ко всем слайдам
          </div>
        </div>
        <div className="flex-1 bg-[#a9a9a9] mb-[4px]" />
      </div>

      {/* Status bar */}
      <div className="flex-1 border-b-[3px] border-[#6dbcc4] flex items-center pl-[6px] pt-[3px]">
        <Field w="w-[713px]" />
        <Field w="w-[116px]" cls="ml-[8px] pl-[3px]">Слайд 1 из 1</Field>
        <Field w="w-[181px]" cls="ml-[9px] pl-[3px]">Слайд1</Field>
        <Field w="w-[45px]" cls="ml-[9px] justify-center">Вст</Field>
        <div className="ml-[3px] mr-px w-[22px] h-[24px] bg-white border border-[#8fb0c8] flex items-center justify-center flex-none"><ViewNormal /></div>
        <Slot><ViewGrid /></Slot>
        <Slot><ViewOutline /></Slot>
        <Slot><ViewNotes /></Slot>
        <Slot><Play /></Slot>
        <Slot w="w-[16px]"><Chev /></Slot>
        <div className="ml-[8px] w-[16px] h-[16px] rounded-full bg-[#e3edf7] border border-[#9fb3c8] flex items-center justify-center flex-none">
          <div className="w-[8px] h-[2px] bg-[#555]" />
        </div>
        <div className="w-[114px] flex items-center flex-none">
          <div className="w-[44px] h-px bg-[#ccc]" />
          <div className="w-[10px] h-[10px] rounded-full bg-[#f0b860] border border-[#d8a040] flex-none" />
          <div className="flex-1 h-px bg-[#ccc]" />
        </div>
        <div className="w-[16px] h-[16px] rounded-full bg-[#e3edf7] border border-[#9fb3c8] flex items-center justify-center text-[13px] leading-[14px] text-[#333] flex-none">+</div>
        <div className="flex-1 text-center leading-[14px] pr-[3px]">88%</div>
      </div>
    </div>
  );
}
